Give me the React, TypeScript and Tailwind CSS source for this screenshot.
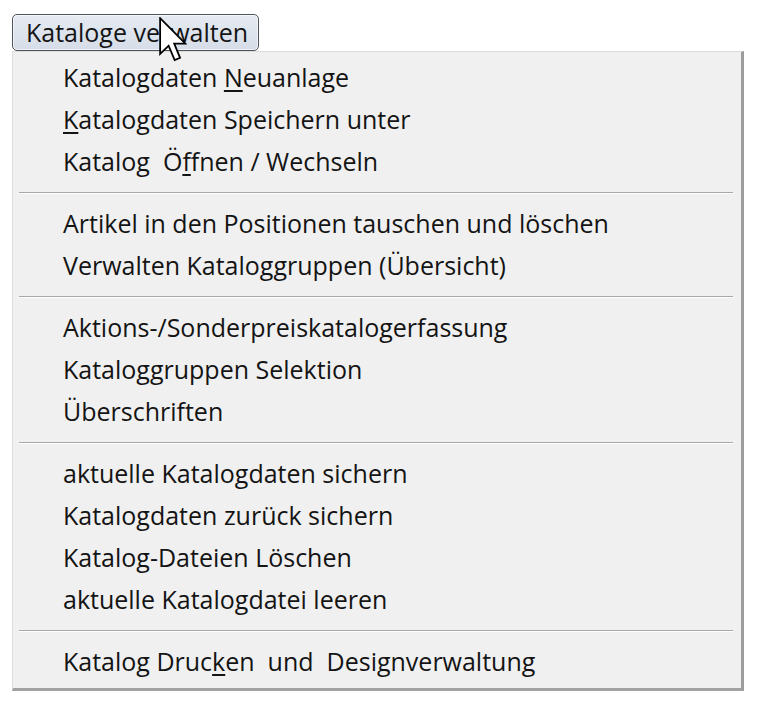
import React from "react";

type Entry = { label: React.ReactNode } | "sep";

const U = ({ children }: { children: React.ReactNode }) => (
    <span className="underline decoration-[1.5px] underline-offset-[3px]">{children}</span>
);

const entries: Entry[] = [
    { label: <>Katalogdaten <U>N</U>euanlage</> },
    { label: <><U>K</U>atalogdaten Speichern unter</> },
    { label: <>Katalog  Ö<U>f</U>fnen / Wechseln</> },
    "sep",
    { label: "Artikel in den Positionen tauschen und löschen" },
    { label: "Verwalten Kataloggruppen (Übersicht)" },
    "sep",
    { label: "Aktions-/Sonderpreiskatalogerfassung" },
    { label: "Kataloggruppen Selektion" },
    { label: "Überschriften" },
    "sep",
    { label: "aktuelle Katalogdaten sichern" },
    { label: "Katalogdaten zurück sichern" },
    { label: "Katalog-Dateien Löschen" },
    { label: "aktuelle Katalogdatei leeren" },
    "sep",
    { label: <>Katalog Druc<U>k</U>en  und  Designverwaltung</> },
];

const Cursor = () => (
    <svg
        className="absolute left-[159px] top-[17px]"
        width="28"
        height="46"
        viewBox="0 0 12.5 20.5"
    >
        <path
            d="M0.5 0.5 L0.5 16.5 L4.3 12.8 L7 19.2 L9.4 18.2 L6.8 11.9 L11.8 11.9 Z"
            fill="#ffffff"
            stroke="#000000"
            strokeWidth="0.8"
            strokeLinejoin="miter"
        />
    </svg>
);

export default function App() {
    return (
        <div
            className="relative h-[704px] w-[764px] overflow-hidden bg-white pl-[12px] pt-[14px] text-[#141414]"
            style={{ fontFamily: '"Open Sans", "Noto Sans", sans-serif' }}
        >
            <div className="flex h-[37px] w-[247px] items-center rounded-[5px] border border-[#50545c] bg-gradient-to-b from-[#e6ebf2] to-[#d6dde8] pl-[13px] text-[25px] shadow-[inset_0_0_0_1px_rgba(255,255,255,0.6)]">
                Kataloge verwalten
            </div>

            <div className="w-[732px] border-b-[3px] border-l border-r-[3px] border-t border-b-[#a2a2a2] border-l-[#dcdcdc] border-r-[#9c9c9c] border-t-[#dcdcdc] bg-[#f0f0f0] py-[5px]">
                {entries.map((e, i) =>
                    e === "sep" ? (
                        <div key={i} className="flex h-[20px] items-center pl-[6px] pr-[8px]">
                            <div className="h-[2px] w-full border-b border-t border-b-white border-t-[#a8a8a8]" />
                        </div>
                    ) : (
                        <div
                            key={i}
                            className="flex h-[42px] items-center whitespace-pre pl-[50px] text-[25px]"
                        >
                            {e.label}
                        </div>
                    )
                )}
            </div>

            <Cursor />
        </div>
    );
}
